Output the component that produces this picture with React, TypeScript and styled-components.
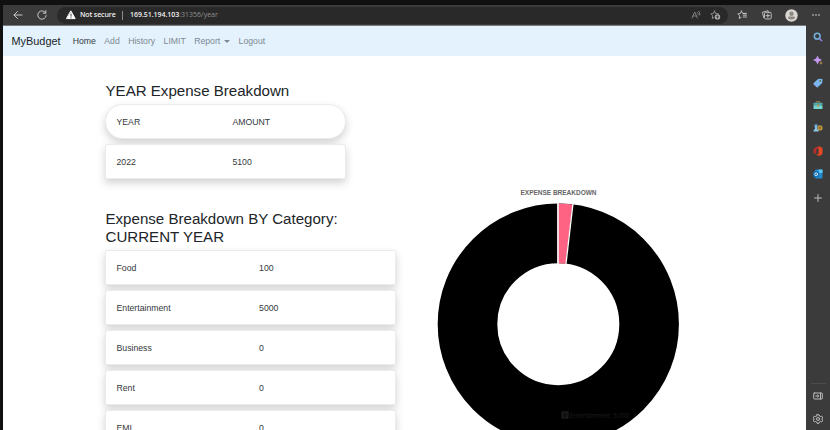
import React from "react";
import styled, { createGlobalStyle, css } from "styled-components";

const GlobalStyle = createGlobalStyle`
  *, *::before, *::after { box-sizing: border-box; }
  body { margin: 0; overflow: hidden; background: #101010; }
`;

const Window = styled.div`
  width: 830px;
  height: 430px;
  padding: 5px 0 0 3px;
  overflow: hidden;
  background: #101010;
  color: #212529;
  font-family: "Liberation Sans", Arial, sans-serif;
  display: flex;
  flex-direction: column;
`;

const Toolbar = styled.header`
  flex: 0 0 20px;
  display: flex;
  align-items: center;
  background: #3b3b3b;
  padding-left: 9px;
`;

const Nav = styled.div`
  display: flex;
  gap: 12px;
  width: 45px;
  flex: none;
`;

const AddressBar = styled.div`
  width: 671px;
  flex: none;
  height: 17px;
  border-radius: 9px;
  background: #292929;
  display: flex;
  align-items: center;
  padding: 0 7px 0 9px;
  font: 7px/10px "Open Sans", "Noto Sans", sans-serif;
  white-space: nowrap;
`;

const Security = styled.span`
  margin-left: 4px;
  width: 37px;
  color: #f0f0f0;
  font-weight: 600;
  letter-spacing: -0.12px;
`;

const Divider = styled.span`
  width: 1px;
  height: 9px;
  margin: 0 7px 0 5px;
  background: #8b8b8b;
`;

const Address = styled.span`
  flex: 1;
  color: #909090;
  b { color: #f0f0f0; font-weight: 600; letter-spacing: -0.04px; }
`;

const AddressActions = styled.div`
  display: flex;
  gap: 8px;
`;

const BrowserActions = styled.div`
  flex: 1;
  display: flex;
  align-items: center;
  padding-left: 9px;
  gap: 12px;
`;

const Main = styled.div`
  flex: 1;
  min-height: 0;
  display: grid;
  grid-template-columns: 803px 24px;
`;

const Page = styled.main`
  min-height: 0;
  overflow: hidden;
  background: #fff;
  border-top: 1px solid #77797d;
`;

const SiteNav = styled.nav`
  height: 30px;
  background: #e3f2fd;
  display: flex;
  align-items: center;
  padding-left: 8.5px;
  font-size: 8.7px;
  line-height: 12px;
`;

const Brand = styled.span`
  width: 61.2px;
  font-size: 10.9px;
`;

const NavLink = styled.span<{ $active?: boolean }>`
  color: ${(p) => (p.$active ? "#343a3e" : "#7f8991")};
  margin-right: 8.4px;
  display: flex;
  align-items: center;
`;

const Caret = styled.i`
  margin-left: 4px;
  border: 3px solid transparent;
  border-top-color: currentColor;
  border-bottom: 0;
`;

const Content = styled.div`
  display: grid;
  grid-template-columns: 291px 242px;
  column-gap: 41px;
  padding: 26px 0 0 102px;
`;

const Report = styled.section`
  min-width: 0;
`;

const Heading = styled.h2`
  margin: 0 0 4px;
  padding-left: 0.5px;
  font-size: 15.1px;
  line-height: 18px;
  font-weight: 400;
`;

const List = styled.div<{ $narrow?: boolean }>`
  width: ${(p) => (p.$narrow ? "241px" : "291px")};
  display: flex;
  flex-direction: column;
  gap: 5px;
  margin-bottom: 31px;
`;

const Row = styled.div<{ $pill?: boolean }>`
  height: 35px;
  padding: 2px 11px 0 10.5px;
  display: grid;
  grid-template-columns: 53.3% 46.7%;
  align-items: center;
  border: 1px solid #ebebeb;
  border-radius: 2px;
  background: #fff;
  box-shadow: 0 4px 9px rgba(0, 0, 0, 0.18);
  font-size: 8.7px;
  line-height: 13px;
  color: #33383c;
  ${(p) => p.$pill && css`border-radius: 18px;`}
`;

const ChartPanel = styled.section`
  padding-top: 106px;
`;

const Chart = styled.svg`
  display: block;
  overflow: visible;
`;

const Sidebar = styled.aside`
  background: #3b3b3b;
  display: flex;
  flex-direction: column;
  align-items: center;
  justify-content: space-between;
  padding: 7px 0 6px;
`;

const Tools = styled.div`
  display: flex;
  flex-direction: column;
  align-items: center;
  gap: 12.8px;
`;

const BottomTools = styled(Tools)`
  width: 15px;
  border-top: 1px solid #4c4c4c;
  padding-top: 7px;
`;

const Icon = styled.svg.attrs((p) => ({ stroke: p.stroke ?? "#c8c8c8", fill: "none" }))`
  display: block;
  flex: none;
  stroke-linecap: round;
  stroke-linejoin: round;
`;

const categories: [string, number][] = [
  ["Food", 100],
  ["Entertainment", 5000],
  ["Business", 0],
  ["Rent", 0],
  ["EMI", 0],
];

const STAR = "M4.5 1 5.6 3.5 8.4 3.8 M4.5 1 3.4 3.5.8 3.9 2.7 5.8 2.2 8.5 4.1 7.5";

function BrowserToolbar() {
  return (
    <Toolbar>
      <Nav>
        <Icon width="12" height="12" viewBox="0 0 12 12"><path d="M10 6H2M5.500 2.500 2 6l3.500 3.500" /></Icon>
        <Icon width="12" height="12" viewBox="0 0 12 12"><path d="M9.700 4A4.200 4.200 0 1 0 10.200 6.500M9.800 1.600V4.200H7.200" /></Icon>
      </Nav>
      <AddressBar>
        <Icon width="10" height="10" viewBox="0 0 10 10">
          <path d="M5 1.200 9.200 8.600H.8Z" fill="#fff" stroke="#fff" />
          <path d="M5 4v2.200M5 7.700v.1" stroke="#292929" strokeWidth=".9" />
        </Icon>
        <Security>Not secure</Security>
        <Divider />
        <Address><b>169.51.194.103</b>:31356/year</Address>
        <AddressActions>
          <Icon width="11" height="10" viewBox="0 0 11 10" strokeWidth=".8">
            <path d="M1 8 3.700 2 6.400 8M2 6h3.500M6.500 2.500q1 .9.700 2.200M7.800 1.200q1.700 1.500 1 4" stroke="#909090" />
          </Icon>
          <Icon width="11" height="10" viewBox="0 0 11 10" strokeWidth=".9">
            <path d={STAR} stroke="#999" />
            <circle cx="7.500" cy="6.900" r="2.700" fill="#b0b0b0" stroke="none" />
            <path d="M7.500 5.600v2.600M6.200 6.900h2.600" stroke="#292929" strokeWidth=".7" />
          </Icon>
        </AddressActions>
      </AddressBar>
      <BrowserActions>
        <Icon width="12" height="10" viewBox="0 0 12 10" strokeWidth=".9">
          <path d={STAR} />
          <path d="M6.500 3.400h3M6.200 5.200h3.300M6.200 7h3.300" />
        </Icon>
        <Icon width="12" height="12" viewBox="0 0 12 12" strokeWidth=".9">
          <path d="M2.800 8.700 1.300 3.300 7 1.700l.5 1.500M3.500 4.500q0-1.200 1.200-1.200H9q1.200 0 1.200 1.200v4.300Q10.200 10 9 10H4.700Q3.500 10 3.500 8.800ZM6.850 4.800v3.700M5 6.650h3.700" />
        </Icon>
        <Icon width="13" height="13" viewBox="0 0 13 13" stroke="none">
          <circle cx="6.500" cy="6.500" r="6.200" fill="#dad6d2" />
          <circle cx="6.500" cy="4.700" r="2.200" fill="#8c8883" />
          <path d="M3 9.200V8.800Q3 7.400 4.500 7.400h4Q10 7.400 10 8.800v.4q-3.500 2.500-7 0Z" fill="#8c8883" />
        </Icon>
        <Icon width="10" height="6" viewBox="0 0 10 6" stroke="none">
          <g fill="#ddd"><circle cx="3" cy="3" r=".8" /><circle cx="6" cy="3" r=".8" /><circle cx="9" cy="3" r=".8" /></g>
        </Icon>
      </BrowserActions>
    </Toolbar>
  );
}

function BrowserSidebar() {
  return (
    <Sidebar>
      <Tools>
        <Icon width="10" height="10" viewBox="0 0 10 10">
          <circle cx="4.200" cy="4.200" r="2.900" stroke="#73b4df" strokeWidth="1.500" />
          <path d="m6.700 6.700 2 2" stroke="#9c7be3" strokeWidth="1.600" />
        </Icon>
        <Icon width="10" height="10" viewBox="0 0 10 10" stroke="none">
          <path d="M4.500.5 5.900 3.600 9 5 5.900 6.400 4.500 9.500 3.100 6.400 0 5 3.100 3.600Z" fill="#c69af2" />
          <path d="m8 6 .6 1.400L10 8l-1.400.6L8 10l-.6-1.400L6 8l1.400-.6Z" fill="#bd8b48" />
        </Icon>
        <Icon width="10" height="10" viewBox="0 0 10 10" stroke="none">
          <path d="m5 1 3.500-.2q1 .1 1 1.100L9.200 5 5 9.100q-.7.600-1.300 0L.8 6.400q-.6-.7 0-1.300Z" fill="#79b8ee" />
          <path d="M.8 5.200 5 9.100q-.7.600-1.300 0L.8 6.400Z" fill="#95a5f0" />
          <circle cx="7.200" cy="2.900" r=".9" fill="#6d693f" />
        </Icon>
        <Icon width="10" height="10" viewBox="0 0 10 10">
          <path d="M3.200 3V1.700h3.600V3" stroke="#a28754" strokeWidth=".9" />
          <rect x=".5" y="2.700" width="9" height="3.200" rx=".6" fill="#52a7a4" stroke="none" />
          <path d="M.5 5.700h9v2.700q0 .6-.6.600H1.100q-.6 0-.6-.6Z" fill="#73d4d0" stroke="none" />
          <rect x="4" y="4.700" width="2" height="2" fill="#b99a4d" stroke="none" />
        </Icon>
        <Icon width="10" height="10" viewBox="0 0 10 10" stroke="none">
          <circle cx="3" cy="3" r="1.700" fill="#6caed9" />
          <path d="M.4 8.600q0-2.200 1.600-2.600V4h2v2q1.800.4 1.800 2.600Z" fill="#8bc5ee" />
          <circle cx="7" cy="4.900" r="2.600" fill="#bc973d" />
          <circle cx="7" cy="4.900" r="1.100" fill="#806335" />
        </Icon>
        <Icon width="10" height="10" viewBox="0 0 10 10" stroke="none">
          <path d="M5.700.3 3.500.9Q.3 2.200.3 5.200q0 2.200 1.500 2.700L3.300 7V4.200Q3.300 2.700 5.700 2Z" fill="#b82e2b" />
          <path d="M5.500.2 8 .9q1.500.7 1.500 2.100v4q0 1.500-1.500 2.200L5.700 10 2.500 8.300l3 .2Z" fill="#e74722" />
        </Icon>
        <Icon width="10" height="10" viewBox="0 0 10 10" stroke="none">
          <rect x="2" y=".5" width="7.500" height="9" rx="1" fill="#2589ce" />
          <path d="M5.700.5H9q.5 0 .5.500v3H5.700Z" fill="#5bc6f2" />
          <rect x=".3" y="2.500" width="5.700" height="5.700" rx=".7" fill="#1270b5" />
          <circle cx="3.150" cy="5.300" r="1.400" stroke="#fff" strokeWidth=".8" />
        </Icon>
        <Icon width="10" height="12" viewBox="0 0 10 12" strokeWidth=".9">
          <path d="M5 2.500v7M1.500 6h7" />
        </Icon>
      </Tools>
      <BottomTools>
        <Icon width="10" height="10" viewBox="0 0 10 10" strokeWidth=".9">
          <rect x=".7" y="2" width="8.600" height="6" rx=".6" /><path d="M7.500 2v6M2.700 5h3M4.500 3.900 5.700 5 4.500 6.100" />
        </Icon>
        <Icon width="10" height="10" viewBox="0 0 10 10" strokeWidth=".9">
          <path d="m4 .7h2l.4 1.300 1 .5 1.300-.4 1 1.800-1 1.100 1 1.100-1 1.800-1.300-.4-1 .5L6 9.300H4L3.600 8l-1-.5-1.300.4-1-1.800 1-1.100-1-1.100 1-1.800 1.300.4 1-.5Z" />
          <circle cx="5" cy="5" r="1.500" />
        </Icon>
      </BottomTools>
    </Sidebar>
  );
}

function ExpenseChart() {
  return (
    <Chart width="242" height="252" viewBox="0 0 242 252">
      <text x="121.500" y="7.300" textAnchor="middle" fontFamily="Liberation Sans" fontWeight="700" fontSize="6.500" fill="#666" textLength="76">EXPENSE BREAKDOWN</text>
      <circle cx="121.300" cy="136.200" r="90.800" fill="none" stroke="#000" strokeWidth="59.600" />
      <path d="M121.600 15.600A120.600 120.600 0 0 1 135.600 16.500L128.600 75.700A61 61 0 0 0 121.600 75.200Z" fill="#ff6384" />
      <path d="M121 14.500V76.500" stroke="#f4e8ec" strokeWidth="1.900" />
      <path d="M136 15.400 128.900 76.500" stroke="#fff" strokeWidth="1.300" />
      <rect x="125" y="224" width="6" height="6" fill="#111" stroke="#242424" strokeWidth="1" />
      <text x="132.500" y="229.600" fontFamily="Liberation Sans" fontSize="6.600" fill="#1b1b1b" textLength="60">Entertainment: 5,000</text>
    </Chart>
  );
}

export default function App() {
  return (
    <>
      <GlobalStyle />
      <Window>
        <BrowserToolbar />
        <Main>
          <Page>
            <SiteNav>
              <Brand>MyBudget</Brand>
              <NavLink $active>Home</NavLink>
              <NavLink>Add</NavLink>
              <NavLink>History</NavLink>
              <NavLink>LIMIT</NavLink>
              <NavLink>Report<Caret /></NavLink>
              <NavLink>Logout</NavLink>
            </SiteNav>
            <Content>
              <Report>
                <Heading>YEAR Expense Breakdown</Heading>
                <List $narrow>
                  <Row $pill><span>YEAR</span><span>AMOUNT</span></Row>
                  <Row><span>2022</span><span>5100</span></Row>
                </List>
                <Heading>Expense Breakdown BY Category: CURRENT YEAR</Heading>
                <List>
                  {categories.map(([name, amount]) => (
                    <Row key={name}><span>{name}</span><span>{amount}</span></Row>
                  ))}
                </List>
              </Report>
              <ChartPanel><ExpenseChart /></ChartPanel>
            </Content>
          </Page>
          <BrowserSidebar />
        </Main>
      </Window>
    </>
  );
}
